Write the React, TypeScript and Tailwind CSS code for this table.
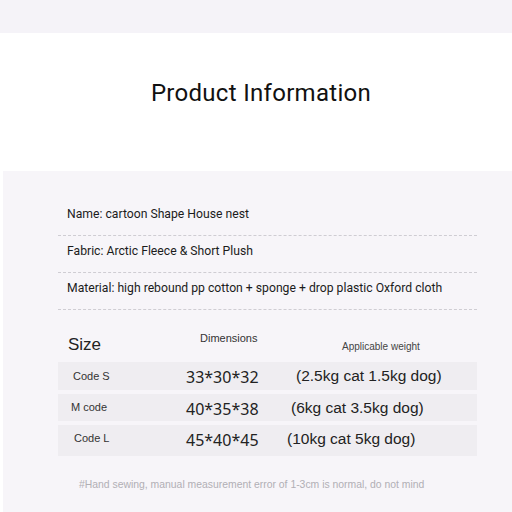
import React from 'react';

const info = [
  'Name: cartoon Shape House nest',
  'Fabric: Arctic Fleece & Short Plush',
  'Material: high rebound pp cotton + sponge + drop plastic Oxford cloth',
];

const rows = [
  { code: 'Code S', codePad: 'pl-[15px]', dim: '33*30*32', weight: '(2.5kg cat 1.5kg dog)', wPad: 'pl-[6px]', h: 'h-[28px]' },
  { code: 'M code', codePad: 'pl-[13px]', dim: '40*35*38', weight: '(6kg cat 3.5kg dog)', wPad: 'pl-[1px]', h: 'h-[27px]' },
  { code: 'Code L', codePad: 'pl-[16px]', dim: '45*40*45', weight: '(10kg cat 5kg dog)', wPad: '-ml-[3px]', h: 'h-[31px] pb-[4px]' },
];

export default function App() {
  return (
    <div className="w-[512px] h-[512px] overflow-hidden bg-white">
      <div className="h-[33px] bg-[#f5f3f8]" />
      <div className="h-[138px] flex items-center justify-center">
        <h1 className="ml-[10px] -mt-[18px] text-[24px] text-[#111] tracking-[0.3px] font-['Roboto',sans-serif]">Product Information</h1>
      </div>
      <div className="h-[341px] bg-[#f7f5f9] ml-[3px] pt-[28px] pl-[55px] pr-[35px] font-['Roboto',sans-serif]">
        {info.map((t) => (
          <div key={t} className="h-[37px] flex items-center pl-[9px] pb-[5px] border-b border-dashed border-[#cfcdd3] text-[12.2px] text-[#1c1c1c] whitespace-nowrap">
            {t}
          </div>
        ))}
        <div className="mt-[20px] font-['Liberation_Sans',Arial,sans-serif]">
          <div className="h-[32px] flex items-start">
            <div className="w-[112px] pl-[10px] pt-[2px] text-[17px] text-[#222]">Size</div>
            <div className="w-[120px] pl-[30px] text-[11px] text-[#333]">Dimensions</div>
            <div className="pl-[52px] pt-[9px] text-[10px] text-[#444]">Applicable weight</div>
          </div>
          <div className="flex flex-col gap-[4px]">
            {rows.map((r) => (
              <div key={r.code} className={`${r.h} flex items-center bg-[#efedf1] text-[#222]`}>
                <div className={`w-[112px] shrink-0 ${r.codePad} text-[11px] text-[#333]`}>{r.code}</div>
                <div className="w-[120px] shrink-0 pl-[16px] pt-[2px] text-[16px] font-['Noto_Sans',sans-serif] text-[#222] whitespace-nowrap">{r.dim}</div>
                <div className={`${r.wPad} text-[15.5px] whitespace-nowrap`}>{r.weight}</div>
              </div>
            ))}
          </div>
          <div className="mt-[21px] pl-[21px] text-[10.4px] text-[#b1afb5] whitespace-nowrap">
            #Hand sewing, manual measurement error of 1-3cm is normal, do not mind
          </div>
        </div>
      </div>
    </div>
  );
}
